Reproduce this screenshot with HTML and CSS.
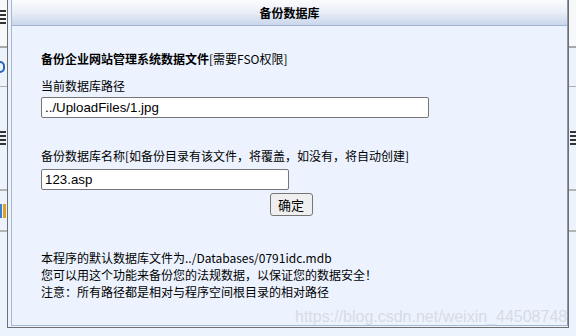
FILE: index.html
```html
<!DOCTYPE html>
<html lang="zh-CN">
<head>
<meta charset="utf-8">
<title>备份数据库</title>
<link rel="stylesheet" href="styles.css">
</head>
<body>
<div class="page">
  <div class="row r1"><span class="mark dark"></span></div>
  <div class="row r2"><span class="mark blue"></span></div>
  <div class="row r3"><span class="mark dark"></span><span class="mark dark"></span></div>
  <div class="row r4"><span class="mark icon"></span></div>
</div>

<div class="dialog">
  <div class="inner">
    <div class="head">备份数据库</div>
    <form class="content">
      <p class="intro"><b>备份企业网站管理系统数据文件</b>[需要FSO权限]</p>
      <label class="lbl">当前数据库路径</label>
      <input class="field wide" type="text" value="../UploadFiles/1.jpg">
      <label class="lbl lbl2">备份数据库名称[如备份目录有该文件，将覆盖，如没有，将自动创建]</label>
      <input class="field narrow" type="text" value="123.asp">
      <div class="actions"><button class="btn" type="button">确定</button></div>
      <div class="notes">
        <div>本程序的默认数据库文件为../Databases/0791idc.mdb</div>
        <div>您可以用这个功能来备份您的法规数据，以保证您的数据安全！</div>
        <div>注意：所有路径都是相对与程序空间根目录的相对路径</div>
      </div>
    </form>
  </div>
</div>

<div class="watermark">https://blog.csdn.net/weixin_44508748</div>
</body>
</html>
```

FILE: styles.css
```css
* { box-sizing: border-box; }

html, body {
  margin: 0;
  padding: 0;
}

body {
  width: 576px;
  height: 336px;
  overflow: hidden;
  background: #edf3fc;
  font-family: "Noto Sans CJK SC", "Noto Sans", sans-serif;
  font-size: 12px;
  color: #000;
  position: relative;
}

/* underlying page (only slivers visible beside the dialog) */
.page {
  display: flex;
  flex-direction: column;
}
.row {
  display: flex;
  justify-content: space-between;
  align-items: center;
}
.r1 { height: 48px; background: #f7f8fa; border-bottom: 2px solid #a9a9a9; align-items: flex-start; padding-top: 10px; }
.r2 { height: 39px; border-bottom: 1px solid #b0b0b0; }
.r3 { height: 104px; border-bottom: 2px solid #b4b4b4; }
.r4 { height: 41px; border-bottom: 2px solid #b4b4b4; }

.mark {
  display: block;
  width: 6px;
  height: 15px;
}
.mark.dark {
  background: repeating-linear-gradient(to bottom, #333 0 2px, transparent 2px 4px);
}
.mark.blue {
  width: 5px;
  height: 12px;
  border: 2px solid #2a64b8;
  border-left: none;
  border-radius: 0 5px 5px 0;
}
.mark.icon {
  width: 6px;
  height: 14px;
  background: linear-gradient(to right, #3a7fd0 0 2px, transparent 2px 3px, #e0a020 3px 6px);
}

/* dialog window */
.dialog {
  position: absolute;
  left: 7px;
  top: 0;
  width: 562px;
  height: 328px;
  border: 1px solid #6f6f6f;
  border-top: none;
  padding: 0 0 1px 3px;
  background: #edf3fc;
}
.inner {
  height: 100%;
  border: 1px solid #a8b8d3;
  border-top: none;
  border-right-color: #8897b2;
  background: #ecf3fe;
}
.head {
  height: 26px;
  line-height: 25px;
  text-align: center;
  font-weight: bold;
  font-size: 12px;
  background: linear-gradient(to bottom, #fbfcfe 0%, #e9eef7 50%, #c9d6eb 100%);
  border-bottom: 1px solid #a3b4d3;
}

.content {
  margin: 0;
  padding: 24px 0 0 29px;
}
.intro {
  margin: 0;
  line-height: 17px;
}
.intro b { font-weight: bold; }

.lbl {
  display: block;
  line-height: 17px;
  margin-top: 10px;
}
.lbl2 { margin-top: 29px; }

.field {
  display: block;
  height: 21px;
  margin: 3px 0 0 0;
  padding: 0 3px;
  border: 1px solid #767676;
  border-radius: 2px;
  background: #fff;
  font-family: "Liberation Sans", Arial, sans-serif;
  font-size: 13.3px;
  color: #000;
}
.wide { width: 388px; }
.narrow { width: 248px; margin-top: 5px; }

.actions {
  width: 500px;
  margin-top: 3px;
  text-align: center;
}
.btn {
  width: 43px;
  height: 23px;
  padding: 0;
  border: 1px solid #767676;
  border-radius: 3px;
  background: #efefef;
  font-family: "Noto Sans CJK SC", sans-serif;
  font-size: 13px;
  color: #000;
  line-height: 20px;
}

.notes {
  margin-top: 33px;
  line-height: 17px;
}

.watermark {
  position: absolute;
  left: 295px;
  top: 308px;
  font-family: "Liberation Sans", Arial, sans-serif;
  font-size: 16px;
  color: #d6dbe3;
  white-space: nowrap;
}
```
